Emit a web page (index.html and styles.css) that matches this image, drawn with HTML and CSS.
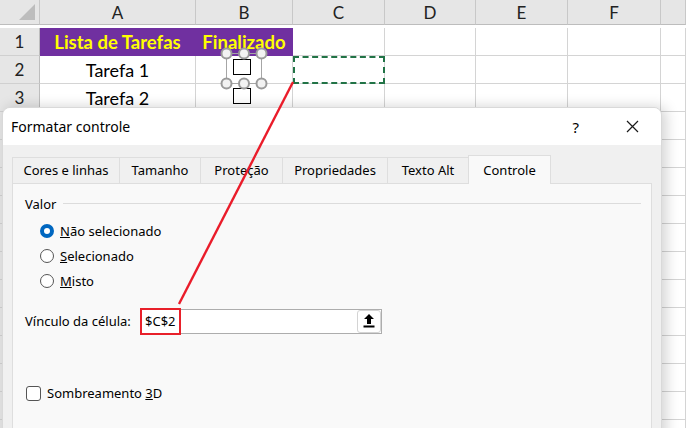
FILE: index.html
```html
<!DOCTYPE html>
<html lang="pt">
<head>
    <meta charset="UTF-8">
    <title>Formatar controle</title>
    <link rel="stylesheet" href="styles.css">
</head>
<body>
    <div class="sheet">
        <div class="corner"><span class="tri"></span></div>
        <div class="colhead">A</div>
        <div class="colhead">B</div>
        <div class="colhead">C</div>
        <div class="colhead">D</div>
        <div class="colhead">E</div>
        <div class="colhead">F</div>
        <div class="colhead"></div>

        <div class="rowhead">1</div>
        <div class="cell title">Lista de Tarefas</div>
        <div class="cell title">Finalizado</div>
        <div class="cell"></div><div class="cell"></div><div class="cell"></div><div class="cell"></div><div class="cell"></div>

        <div class="rowhead">2</div>
        <div class="cell task">Tarefa 1</div>
        <div class="cell"></div>
        <div class="cell copied"></div>
        <div class="cell"></div><div class="cell"></div><div class="cell"></div><div class="cell"></div>

        <div class="rowhead">3</div>
        <div class="cell task">Tarefa 2</div>
        <div class="cell"></div><div class="cell"></div><div class="cell"></div><div class="cell"></div><div class="cell"></div><div class="cell"></div>
    </div>
    <div class="sheet rest" id="rest"></div>

    <!-- checkbox controls sitting on the sheet, first one selected -->
    <svg class="controls" width="50" height="70" viewBox="220 46 50 70">
        <rect x="233.5" y="59.5" width="17" height="15" fill="#fff" stroke="#000"/>
        <rect x="233.5" y="88.5" width="17" height="15" fill="#fff" stroke="#000"/>
        <rect x="226.5" y="53.5" width="35" height="30" fill="none" stroke="#a6a6a6"/>
        <g fill="#f2f2f2" stroke="#9a9a9a" stroke-width="2">
            <circle cx="226.5" cy="53.5" r="5"/>
            <circle cx="244" cy="53.5" r="5"/>
            <circle cx="261.5" cy="53.5" r="5"/>
            <circle cx="226.5" cy="83.5" r="5"/>
            <circle cx="244" cy="83.5" r="5"/>
            <circle cx="261.5" cy="83.5" r="5"/>
        </g>
    </svg>

    <div class="dialog">
        <div class="titlebar">
            <span class="dtitle">Formatar controle</span>
            <span class="help">?</span>
            <svg class="close" width="13" height="13" viewBox="0 0 13 13">
                <path d="M1 1 L12 12 M12 1 L1 12" stroke="#1a1a1a" stroke-width="1.2"/>
            </svg>
        </div>
        <div class="dbody">
            <div class="tabs">
                <div class="tab" style="width:107px">Cores e linhas</div>
                <div class="tab" style="width:81px">Tamanho</div>
                <div class="tab" style="width:82px">Proteção</div>
                <div class="tab" style="width:105px">Propriedades</div>
                <div class="tab" style="width:81px">Texto Alt</div>
                <div class="tab active" style="width:83px">Controle</div>
            </div>
            <div class="panel">
                <div class="group">
                    <span>Valor</span>
                    <div class="rule"></div>
                </div>
                <div class="radios">
                    <div class="radio"><span class="dot on"></span><span><u>N</u>ão selecionado</span></div>
                    <div class="radio"><span class="dot"></span><span><u>S</u>elecionado</span></div>
                    <div class="radio"><span class="dot"></span><span><u>M</u>isto</span></div>
                </div>
                <div class="link-row">
                    <span class="label">Vínculo da célula:</span>
                    <div class="field">
                        <span class="ref">$C$2</span>
                        <span class="mark"></span>
                        <button class="pick">
                            <svg width="12" height="14" viewBox="0 0 12 14">
                                <path d="M6 0 L11 5 L8 5 L8 10 L4 10 L4 5 L1 5 Z" fill="#000"/>
                                <rect x="0.5" y="11.5" width="11" height="2" fill="#000"/>
                            </svg>
                        </button>
                    </div>
                </div>
                <div class="check">
                    <span class="box"></span>
                    <span>Sombreamento <u>3</u>D</span>
                </div>
            </div>
        </div>
    </div>

    <svg class="arrow" width="686" height="428">
        <line x1="293" y1="82" x2="179" y2="304" stroke="#ea1c2a" stroke-width="2.4"/>
    </svg>

    <script>
        // empty rows below row 3 (their numbers sit under the dialog)
        const rest = document.getElementById("rest");
        for (let r = 4; r <= 15; r++) {
            let row = '<div class="rowhead"></div>';
            for (let c = 0; c < 7; c++) row += '<div class="cell"></div>';
            rest.innerHTML += row;
        }
    </script>
</body>
</html>
```

FILE: styles.css
```css
*{
    margin: 0;
    padding: 0;
    box-sizing: border-box;
}
body{
    width: 686px;
    height: 428px;
    overflow: hidden;
    position: relative;
    background: #fff;
    font-family: Lato, "Liberation Sans", sans-serif;
}
.sheet{
    display: grid;
    grid-template-columns: 40px 156px 97px 92px 91px 92px 93px 25px;
    grid-auto-rows: 28px;
}
.corner, .colhead{
    height: 25px;
    background: #e6e6e6;
    border-right: 1px solid #c8c8c8;
    border-bottom: 1px solid #bdbdbd;
    font-size: 17px;
    color: #222;
    display: flex;
    align-items: center;
    justify-content: center;
}
.corner{
    position: relative;
}
.tri{
    position: absolute;
    right: 4px;
    bottom: 4px;
    width: 0;
    height: 0;
    border-left: 16px solid transparent;
    border-bottom: 16px solid #bdbdbd;
}
.rowhead{
    background: #e6e6e6;
    border-right: 1px solid #bdbdbd;
    border-bottom: 1px solid #d0d0d0;
    font-size: 17px;
    color: #222;
    display: flex;
    align-items: center;
    justify-content: center;
}
.cell{
    border-right: 1px solid #d4d4d4;
    border-bottom: 1px solid #d4d4d4;
    font-size: 18px;
    display: flex;
    align-items: center;
    justify-content: center;
    color: #000;
}
.title{
    background: #7030a0;
    border-color: #7030a0;
    color: #ffff00;
    font-weight: 700;
    font-size: 18.5px;
}
.copied{
    outline: 2px dashed #217346;
    outline-offset: -2px;
}
.controls{
    position: absolute;
    left: 220px;
    top: 46px;
}
.dialog{
    position: absolute;
    left: 2px;
    top: 107px;
    width: 660px;
    height: 340px;
    background: #f0f0f0;
    border: 1px solid #d9d9d9;
    border-radius: 8px 8px 0 0;
    overflow: hidden;
    box-shadow: 4px 0 14px rgba(0, 0, 0, 0.18);
    font-family: "Noto Sans", "Open Sans", sans-serif;
    font-size: 13px;
    color: #000;
}
.titlebar{
    height: 37px;
    background: #fff;
    display: flex;
    align-items: center;
    padding-left: 8px;
}
.dtitle{
    font-size: 14px;
    flex: 1;
}
.help{
    font-size: 15px;
    margin-right: 47px;
}
.close{
    margin-right: 22px;
}
.dbody{
    padding: 9px 0 0 9px;
}
.tabs{
    display: flex;
    align-items: flex-end;
    height: 29px;
}
.tab{
    height: 26px;
    border: 1px solid #dedede;
    border-bottom: none;
    border-right: none;
    background: #f0f0f0;
    text-align: center;
    line-height: 25px;
}
.tab.active{
    height: 29px;
    background: #f9f9f9;
    border-right: 1px solid #dedede;
    line-height: 28px;
    margin-bottom: -1px;
    position: relative;
}
.panel{
    width: 640px;
    height: 260px;
    background: #f9f9f9;
    border: 1px solid #dedede;
    padding: 10px 0 0 12px;
}
.group{
    display: flex;
    align-items: center;
    height: 20px;
}
.rule{
    width: 578px;
    height: 1px;
    background: #dcdcdc;
    margin-left: 7px;
    margin-top: -2px;
}
.radios{
    padding: 4px 0 0 15px;
}
.radio{
    display: flex;
    align-items: center;
    height: 25px;
    gap: 6px;
}
.dot{
    width: 14px;
    height: 14px;
    border-radius: 50%;
    border: 1px solid #555;
    background: #fff;
}
.dot.on{
    border: 4px solid #0067c0;
}
.link-row{
    display: flex;
    align-items: center;
    margin-top: 15px;
    height: 26px;
}
.label{
    width: 116px;
}
.field{
    position: relative;
    width: 241px;
    height: 25px;
    background: #fff;
    border: 1px solid #adadad;
    display: flex;
    align-items: center;
    padding-left: 3px;
}
.ref{
    flex: 1;
}
.mark{
    position: absolute;
    left: -2px;
    top: -2px;
    width: 41px;
    height: 27px;
    border: 2px solid #e8202a;
}
.pick{
    width: 24px;
    height: 23px;
    background: #fff;
    border: 1px solid #d4d4d4;
    border-radius: 3px;
    display: flex;
    align-items: center;
    justify-content: center;
}
.check{
    display: flex;
    align-items: center;
    gap: 6px;
    margin-top: 50px;
    padding-left: 1px;
}
.box{
    width: 15px;
    height: 15px;
    border: 1px solid #555;
    border-radius: 3px;
    background: #fff;
}
.arrow{
    position: absolute;
    left: 0;
    top: 0;
    pointer-events: none;
}
```
